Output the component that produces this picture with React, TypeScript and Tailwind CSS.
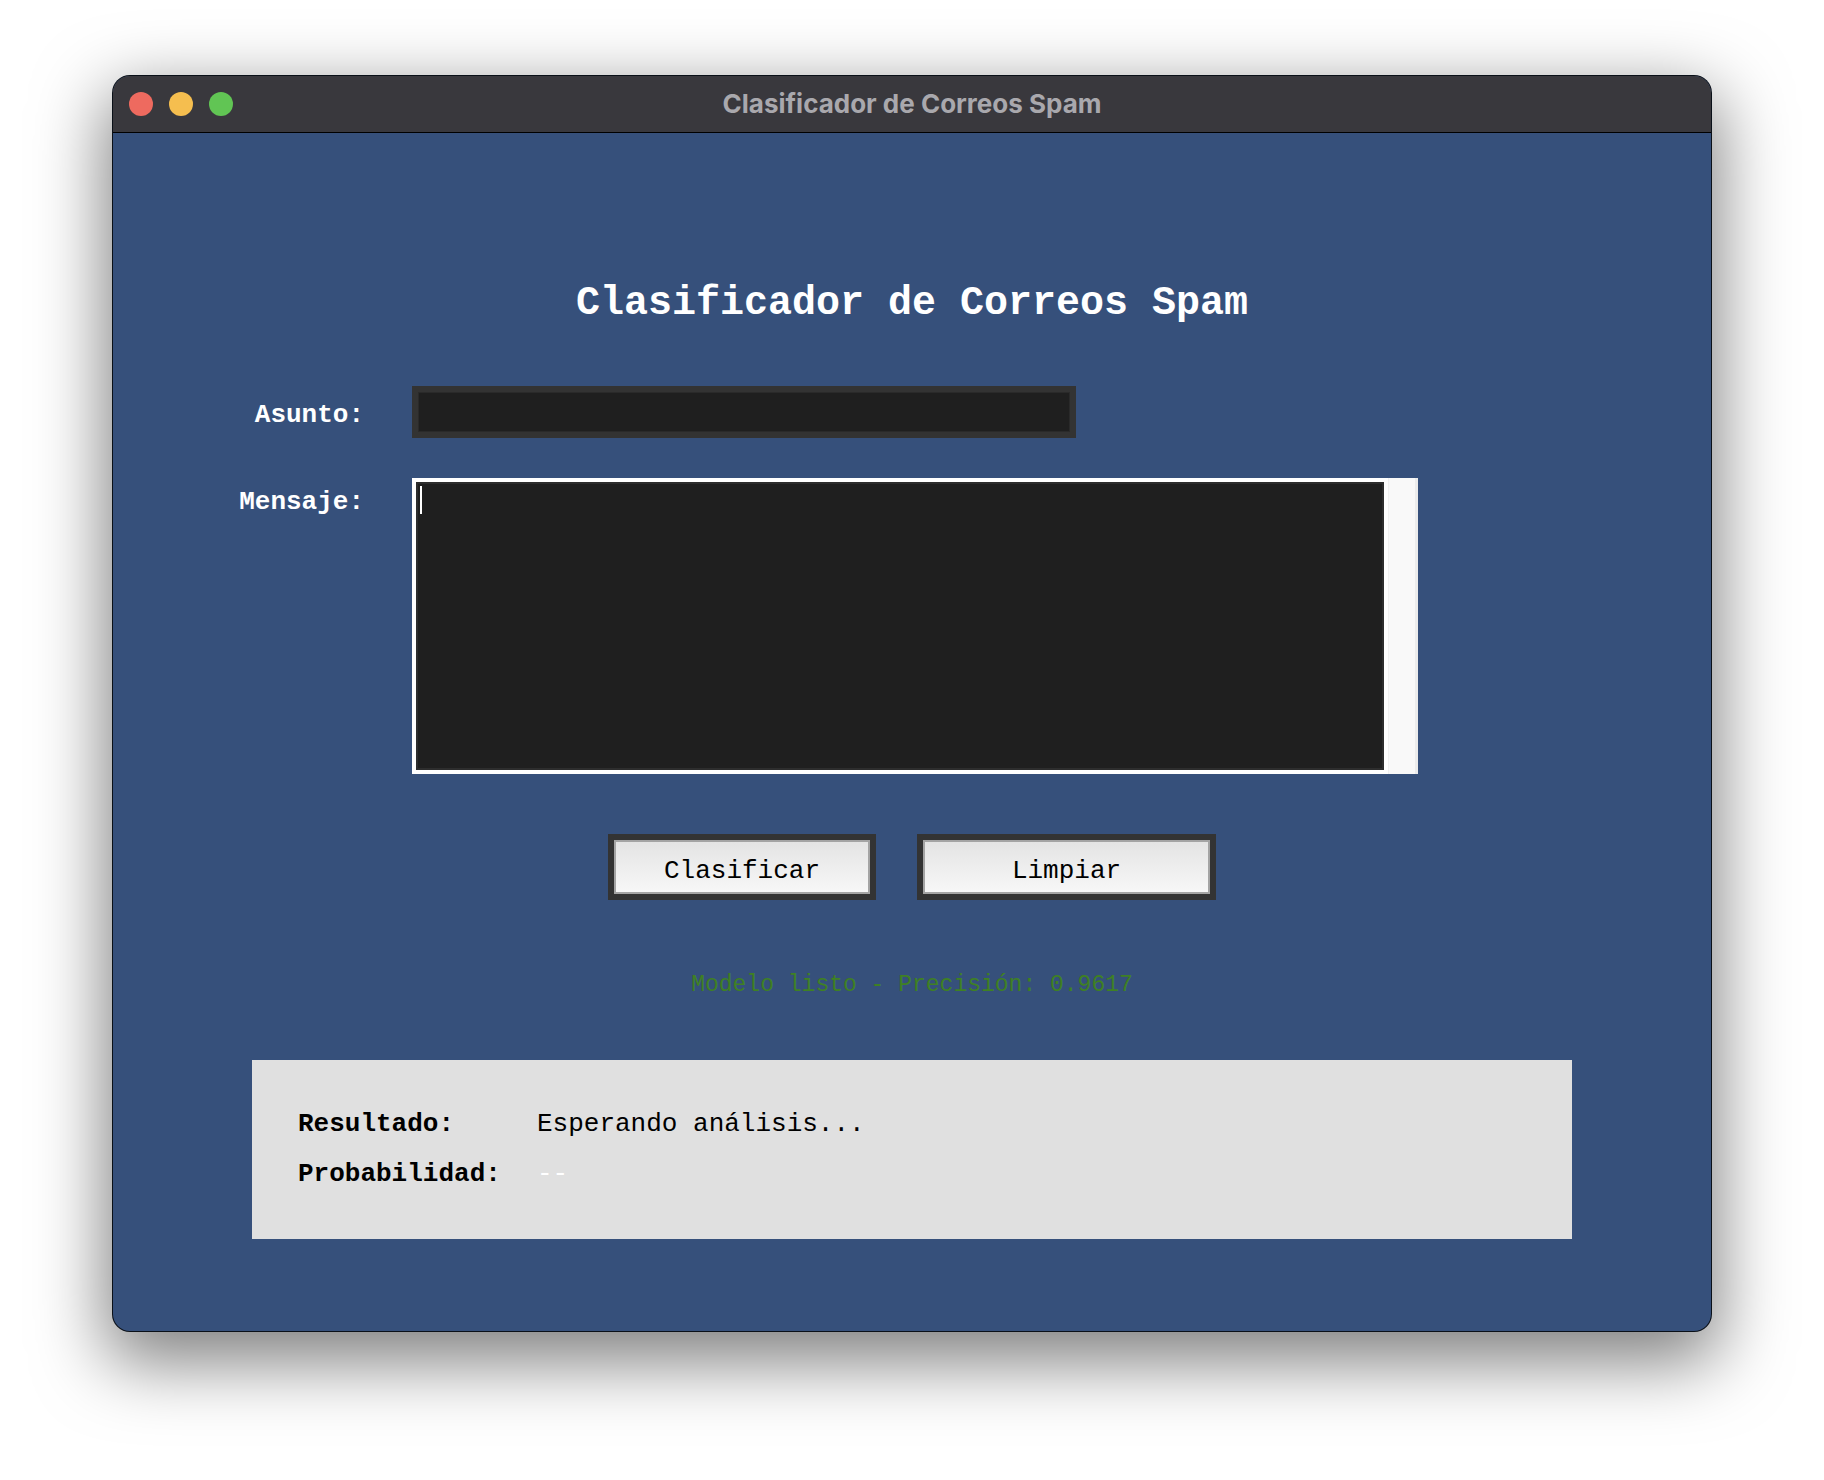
import React from "react";

const mono = "font-['Liberation_Mono','Courier_New',monospace]";

const TrafficLights = () => (
  <div className="flex items-center gap-[16px] pl-[16px]">
    <span className="block h-[24px] w-[24px] rounded-full bg-[#ee6a5f]" />
    <span className="block h-[24px] w-[24px] rounded-full bg-[#f5be4f]" />
    <span className="block h-[24px] w-[24px] rounded-full bg-[#61c554]" />
  </div>
);

const TkButton = ({ label, width }: { label: string; width: string }) => (
  <button className={`${width} h-[66px] border-[6px] border-[#333333] bg-[#333333]`}>
    <div
      className={`flex h-full w-full items-center justify-center border-2 border-[#a4a4a4]
                  bg-gradient-to-b from-[#e4e4e4] to-[#f7f7f7] pt-[8px]
                  text-[26px] leading-[30px] text-black ${mono}`}
    >
      {label}
    </div>
  </button>
);

export default function App() {
  return (
    <div className="min-h-screen w-full bg-white pt-[75px]">
      <div
        className="mx-auto flex h-[1257px] w-[1600px] flex-col overflow-hidden rounded-[18px]
                   border border-black/80 bg-[#36507b]
                   shadow-[0_24px_70px_6px_rgba(0,0,0,0.5)]"
      >
        {/* Title bar */}
        <div className="relative flex h-[57px] shrink-0 items-center border-b border-black bg-[#39383d]">
          <TrafficLights />
          <div className="absolute inset-0 flex items-center justify-center pb-[2px]">
            <span className="font-['Inter',sans-serif] text-[26px] font-bold text-[#a9a8ad]">
              Clasificador de Correos Spam
            </span>
          </div>
        </div>

        {/* Content */}
        <div className={`flex flex-1 flex-col ${mono}`}>
          <h1 className="mt-[147px] text-center text-[40px] font-bold leading-[48px] text-white">
            Clasificador de Correos Spam
          </h1>

          {/* Asunto */}
          <div className="mt-[58px] flex items-center gap-[48px]">
            <label className="w-[251px] pt-[6px] text-right text-[26px] font-bold leading-[30px] text-white">
              Asunto:
            </label>
            <div className="h-[52px] w-[664px] border-[6px] border-[#333333] bg-[#1f1f1f] shadow-[inset_0_0_0_1px_#2a2a2a]" />
          </div>

          {/* Mensaje */}
          <div className="mt-[40px] flex items-start gap-[48px]">
            <label className="w-[251px] pt-[9px] text-right text-[26px] font-bold leading-[30px] text-white">
              Mensaje:
            </label>
            <div className="flex h-[296px] w-[1006px] bg-white">
              <div className="my-[4px] ml-[4px] flex-1 border-2 border-[#2d2d2d] bg-[#1f1f1f] pl-[2px] pt-[2px]">
                <span className="block h-[28px] w-[2px] bg-white" />
              </div>
              <div className="ml-[4px] h-full w-[30px] border-l border-r-[3px] border-l-[#f1f1f1] border-r-[#ececec] bg-[#f9f9f9]" />
            </div>
          </div>

          {/* Buttons */}
          <div className="mt-[60px] flex justify-center gap-[41px]">
            <TkButton label="Clasificar" width="w-[268px]" />
            <TkButton label="Limpiar" width="w-[299px]" />
          </div>

          {/* Status */}
          <p className="mt-[71px] text-center text-[23px] leading-[28px] text-[#3f8024]">
            Modelo listo - Precisión: 0.9617
          </p>

          {/* Result panel */}
          <div className="mx-auto mt-[61px] h-[179px] w-[1320px] bg-[#e0e0e0] pl-[46px] pt-[49px]">
            <div className="flex flex-col gap-[20px] text-[26px] leading-[30px]">
              <div className="flex">
                <span className="w-[239px] font-bold text-black">Resultado:</span>
                <span className="text-black">Esperando análisis...</span>
              </div>
              <div className="flex">
                <span className="w-[239px] font-bold text-black">Probabilidad:</span>
                <span className="text-white">--</span>
              </div>
            </div>
          </div>
        </div>
      </div>
    </div>
  );
}
